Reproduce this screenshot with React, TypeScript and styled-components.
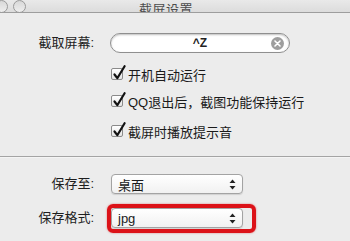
import React from "react";
import styled, { createGlobalStyle } from "styled-components";

const Global = createGlobalStyle`
  html, body { margin: 0; padding: 0; background: #ececec; }
  body { font-family: "Liberation Sans", "Noto Sans CJK SC", sans-serif; }
`;

const Window = styled.div`
  width: 350px;
  height: 241px;
  overflow: hidden;
  display: flex;
  flex-direction: column;
  background: #ececec;
  color: #1c1c1c;
  font-size: 13px;
`;

const TitleBar = styled.div`
  height: 12px;
  flex: none;
  overflow: hidden;
  display: grid;
  grid-template-columns: 60px 1fr 60px;
  align-items: end;
  background: linear-gradient(#e9e9e9, #dcdcdc);
  border-bottom: 1px solid #9d9d9d;
`;

const Lights = styled.div`
  display: flex;
  gap: 5px;
  margin-left: -5px;
  margin-bottom: 5px;
`;

const Light = styled.span`
  width: 11px;
  height: 11px;
  border-radius: 50%;
  border: 1px solid #9a9a9a;
  background: linear-gradient(#d8d8d8, #eeeeee);
  flex: none;
`;

const Title = styled.div`
  text-align: center;
  padding-right: 18px;
  font-size: 13px;
  line-height: 13px;
  padding-bottom: 2px;
  color: #4c4c4c;
  letter-spacing: 0.5px;
`;

const Section = styled.div<{ $top: number; $bottom: number }>`
  padding: ${(p) => p.$top}px 0 ${(p) => p.$bottom}px;
  display: flex;
  flex-direction: column;
`;

const Divider = styled.div`
  height: 0;
  border-top: 1px solid #a4a4a4;
  border-bottom: 1px solid #f4f4f4;
`;

const Row = styled.div<{ $gap: number; $mt?: number }>`
  display: grid;
  grid-template-columns: 94px auto;
  column-gap: ${(p) => p.$gap}px;
  align-items: center;
  justify-content: start;
  margin-top: ${(p) => p.$mt ?? 0}px;
`;

const Label = styled.div`
  text-align: right;
  font-size: 13px;
  line-height: 16px;
  color: #1e1e1e;
  white-space: nowrap;
`;

const SearchField = styled.div`
  width: 180px;
  height: 20px;
  box-sizing: border-box;
  border-radius: 10px;
  border: 1px solid #8f8f8f;
  background: #fff;
  box-shadow: inset 0 1px 2px rgba(0, 0, 0, 0.25);
  display: grid;
  grid-template-columns: 1fr auto;
  align-items: center;
  padding: 0 5px 0 12px;
`;

const FieldText = styled.span`
  text-align: center;
  font-weight: 700;
  font-size: 12px;
  color: #222;
  padding-left: 6px;
`;

const ClearBtn = styled.span`
  width: 13px;
  height: 13px;
  border-radius: 50%;
  background: #9e9e9e;
  display: flex;
  align-items: center;
  justify-content: center;
`;

const CheckRow = styled.label`
  display: flex;
  align-items: center;
  gap: 5px;
  height: 16px;
  font-size: 13px;
  color: #1a1a1a;
  white-space: nowrap;
`;

const Box = styled.span`
  position: relative;
  width: 12px;
  height: 12px;
  box-sizing: border-box;
  border: 1px solid #8a8a8a;
  border-radius: 2px;
  background: linear-gradient(#ffffff, #e4e4e4);
  flex: none;
`;

const Tick = styled.svg`
  position: absolute;
  left: 0px;
  top: -4px;
  overflow: visible;
`;

const Popup = styled.div`
  width: 132px;
  height: 20px;
  box-sizing: border-box;
  border: 1px solid #a3a3a3;
  border-radius: 4px;
  background: linear-gradient(#ffffff, #f1f1f1);
  box-shadow: 0 1px 1px rgba(0, 0, 0, 0.12);
  display: flex;
  align-items: center;
  justify-content: space-between;
  padding: 0 6px 0 6px;
  font-size: 13px;
  color: #1a1a1a;
`;

const Highlight = styled.div`
  position: relative;
  width: 132px;
  &::after {
    content: "";
    position: absolute;
    left: -4px;
    top: -4px;
    right: -13px;
    bottom: -5px;
    border: 4px solid #dc1218;
    border-radius: 6px;
    box-shadow: 0 0 2px rgba(200, 0, 0, 0.5);
    pointer-events: none;
  }
`;

const Arrows = () => (
  <svg width="7" height="11" viewBox="0 0 7 11">
    <path d="M3.5 0.5 L6.5 4 L0.5 4 Z" fill="#222" />
    <path d="M3.5 10.5 L6.5 7 L0.5 7 Z" fill="#222" />
  </svg>
);

const Check = ({ children }: { children: React.ReactNode }) => (
  <CheckRow>
    <Box>
      <Tick width="14" height="16" viewBox="0 0 14 16">
        <path
          d="M2.5 9.5 L5.3 13.2 L12.6 1.2"
          fill="none"
          stroke="#111"
          strokeWidth="2.2"
          strokeLinecap="round"
          strokeLinejoin="round"
        />
      </Tick>
    </Box>
    <span>{children}</span>
  </CheckRow>
);

export default function App() {
  return (
    <>
      <Global />
      <Window>
        <TitleBar>
          <Lights>
            <Light />
            <Light />
          </Lights>
          <Title>截屏设置</Title>
          <span />
        </TitleBar>
        <Section $top={20} $bottom={17}>
          <Row $gap={16}>
            <Label>截取屏幕:</Label>
            <SearchField>
              <FieldText>^Z</FieldText>
              <ClearBtn>
                <svg width="7" height="7" viewBox="0 0 7 7">
                  <path d="M1 1 L6 6 M6 1 L1 6" stroke="#fff" strokeWidth="1.6" strokeLinecap="round" />
                </svg>
              </ClearBtn>
            </SearchField>
          </Row>
          <Row $gap={17} $mt={13}>
            <span />
            <Check>开机自动运行</Check>
          </Row>
          <Row $gap={17} $mt={11}>
            <span />
            <Check>QQ退出后，截图功能保持运行</Check>
          </Row>
          <Row $gap={17} $mt={14}>
            <span />
            <Check>截屏时播放提示音</Check>
          </Row>
        </Section>
        <Divider />
        <Section $top={16} $bottom={0}>
          <Row $gap={17}>
            <Label>保存至:</Label>
            <Popup>
              <span>桌面</span>
              <Arrows />
            </Popup>
          </Row>
          <Row $gap={17} $mt={14}>
            <Label>保存格式:</Label>
            <Highlight>
              <Popup>
                <span>jpg</span>
                <Arrows />
              </Popup>
            </Highlight>
          </Row>
        </Section>
      </Window>
    </>
  );
}
